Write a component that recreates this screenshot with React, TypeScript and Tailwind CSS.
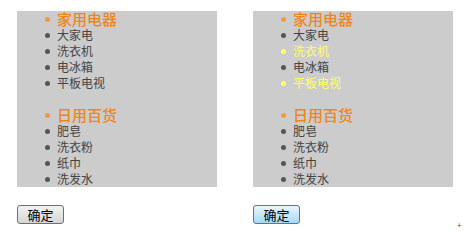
const groups = [
  { title: "家用电器", items: ["大家电", "洗衣机", "电冰箱", "平板电视"] },
  { title: "日用百货", items: ["肥皂", "洗衣粉", "纸巾", "洗发水"] },
];

const font = { fontFamily: '"Noto Sans CJK SC", "Liberation Sans", sans-serif' };

function Row({
  text,
  head,
  hl,
}: {
  text: string;
  head?: boolean;
  hl?: boolean;
}) {
  const dot = head ? "bg-[#f39a3a]" : hl ? "bg-[#ffff66]" : "bg-[#555555]";
  const txt = head
    ? "text-[15px] font-medium text-[#f08519]"
    : hl
      ? "text-[12px] text-[#ffff66]"
      : "text-[12px] text-[#444444]";
  return (
    <div className="flex h-4 items-center">
      <span className={`ml-[28px] h-[5px] w-[5px] shrink-0 rounded-full ${dot}`} />
      <span className={`ml-[7px] leading-4 ${txt}`}>{text}</span>
    </div>
  );
}

function Panel({ highlight }: { highlight: boolean }) {
  return (
    <div className="flex flex-col">
      <div className="h-[176px] w-[200px] bg-[#cccccc]">
        {groups.map((g, gi) => (
          <div key={g.title} className={gi > 0 ? "mt-4" : ""}>
            <Row text={g.title} head />
            {g.items.map((it, i) => (
              <Row
                key={it}
                text={it}
                hl={highlight && gi === 0 && (i === 1 || i === 3)}
              />
            ))}
          </div>
        ))}
      </div>
      <div className="mt-[18px] flex">
        <button
          className={
            highlight
              ? "flex h-[19px] w-[47px] items-center justify-center rounded-[3px] border border-[#3c7fb1] bg-gradient-to-b from-[#eaf6fd] to-[#a7d9f5] text-[13px] leading-none text-black"
              : "flex h-[19px] w-[47px] items-center justify-center rounded-[3px] border border-[#707070] bg-gradient-to-b from-[#f2f2f2] to-[#d6d6d6] text-[13px] leading-none text-black"
          }
        >
          确定
        </button>
      </div>
    </div>
  );
}

export default function App() {
  return (
    <div className="relative h-[231px] w-[466px] bg-white" style={font}>
      <div className="flex gap-[36px] pl-[17px] pt-[11px]">
        <Panel highlight={false} />
        <Panel highlight />
      </div>
      <span className="absolute left-[457px] top-[221px] text-[8px] leading-none text-[#555555]">+</span>
    </div>
  );
}
